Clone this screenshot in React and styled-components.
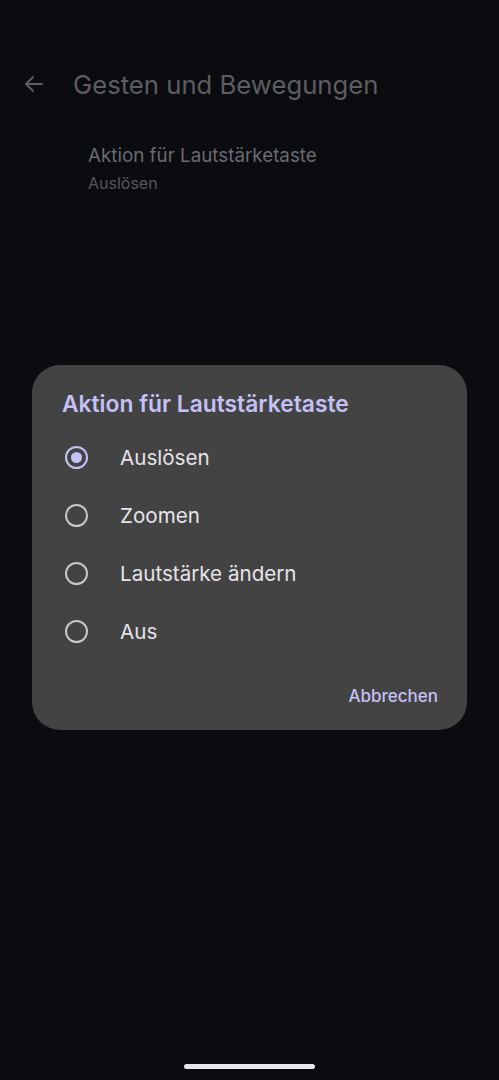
import React from "react";
import styled, { createGlobalStyle } from "styled-components";

const Global = createGlobalStyle`
  html, body { margin: 0; padding: 0; background: #0b0c10; }
  body { font-family: "Inter", "Roboto", sans-serif; }
  #root { min-height: 1080px; }
`;

const Page = styled.div`
  position: relative;
  width: 499px;
  height: 1080px;
  background: #0b0c10;
  overflow: hidden;
  display: flex;
  flex-direction: column;
`;

const Header = styled.div`
  display: flex;
  align-items: center;
  height: 56px;
  margin-top: 56px;
  padding-left: 22px;
  gap: 27px;
`;

const HeaderTitle = styled.h1`
  margin: 0;
  font-family: "Inter", sans-serif;
  font-weight: 400;
  font-size: 25.7px;
  color: #5d5d63;
`;

const Item = styled.div`
  padding-left: 88px;
  margin-top: 32px;
  display: flex;
  flex-direction: column;
  gap: 6px;
`;

const ItemTitle = styled.div`
  font-size: 18.8px;
  color: #6a6a70;
`;

const ItemSub = styled.div`
  font-size: 16px;
  color: #57575c;
`;

const Overlay = styled.div`
  position: absolute;
  inset: 0;
  display: flex;
  justify-content: center;
  align-items: flex-start;
  padding-top: 365px;
`;

const Dialog = styled.div`
  width: 435px;
  height: 365px;
  box-sizing: border-box;
  background: #434343;
  border-radius: 28px;
  padding: 25px 29px 0 30px;
  display: flex;
  flex-direction: column;
`;

const DialogTitle = styled.h2`
  margin: 0 0 11px 0;
  font-family: "Inter", sans-serif;
  font-weight: 600;
  font-size: 22.8px;
  color: #c4c1f7;
`;

const Option = styled.div`
  display: flex;
  align-items: center;
  height: 58px;
  gap: 32px;
  padding-left: 3px;
`;

const Radio = styled.span`
  width: 23px;
  height: 23px;
  box-sizing: border-box;
  border-radius: 50%;
  border: 2px solid ${(p) => (p.$checked ? "#c4c1f7" : "#c9c6cc")};
  display: flex;
  align-items: center;
  justify-content: center;
  &::after {
    content: "";
    width: 11px;
    height: 11px;
    border-radius: 50%;
    background: ${(p) => (p.$checked ? "#c4c1f7" : "transparent")};
  }
`;

const OptionLabel = styled.span`
  font-size: 20.6px;
  color: #e6e3ea;
`;

const Actions = styled.div`
  display: flex;
  justify-content: flex-end;
  margin-top: 26px;
`;

const TextButton = styled.button`
  background: none;
  border: none;
  padding: 0;
  font-family: "Inter", sans-serif;
  font-weight: 500;
  font-size: 17px;
  color: #c4c1f7;
`;

const HomeBar = styled.div`
  position: absolute;
  left: 184px;
  bottom: 11px;
  width: 131px;
  height: 5px;
  border-radius: 3px;
  background: #e8e8e8;
`;

const options = ["Auslösen", "Zoomen", "Lautstärke ändern", "Aus"];

export default function App() {
  return (
    <Page>
      <Global />
      <Header>
        <svg width="24" height="24" viewBox="0 0 24 24" fill="none">
          <path d="M20 12H4M11 5l-7 7 7 7" stroke="#5d5d63" strokeWidth="2" strokeLinecap="round" strokeLinejoin="round" />
        </svg>
        <HeaderTitle>Gesten und Bewegungen</HeaderTitle>
      </Header>
      <Item>
        <ItemTitle>Aktion für Lautstärketaste</ItemTitle>
        <ItemSub>Auslösen</ItemSub>
      </Item>
      <Overlay>
        <Dialog>
          <DialogTitle>Aktion für Lautstärketaste</DialogTitle>
          {options.map((o, i) => (
            <Option key={o}>
              <Radio $checked={i === 0} />
              <OptionLabel>{o}</OptionLabel>
            </Option>
          ))}
          <Actions>
            <TextButton>Abbrechen</TextButton>
          </Actions>
        </Dialog>
      </Overlay>
      <HomeBar />
    </Page>
  );
}
